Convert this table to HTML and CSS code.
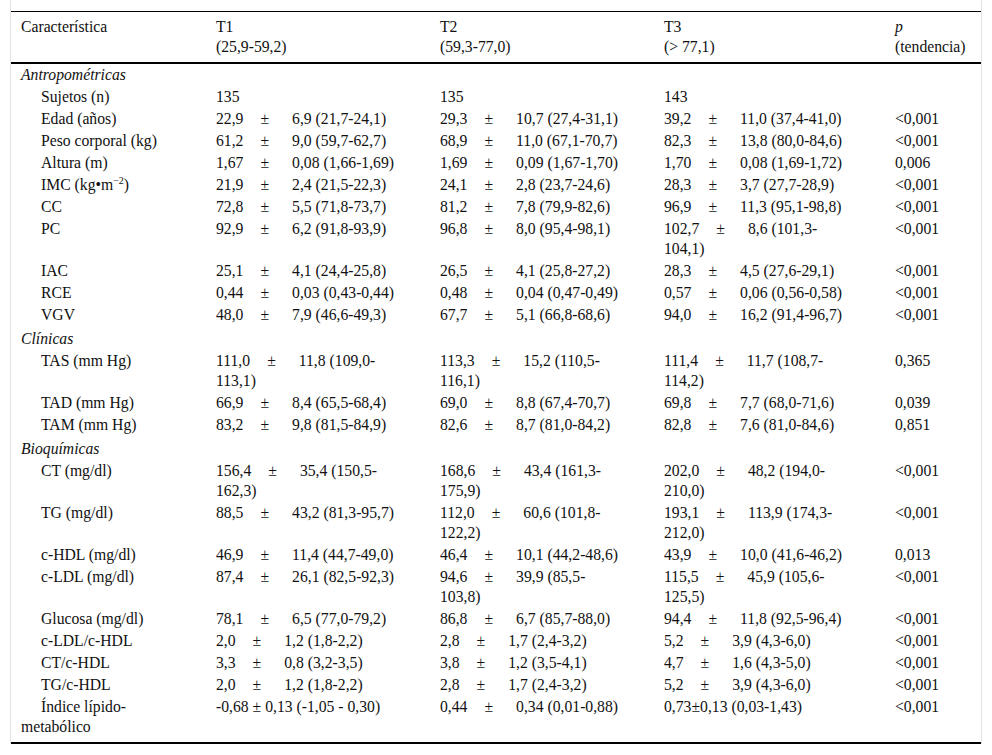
FILE: index.html
```html
<!DOCTYPE html>
<html lang="es">
<head>
<meta charset="utf-8">
<title>Tabla</title>
<link rel="stylesheet" href="styles.css">
</head>
<body>
<div class="frame">
<table class="tbl">
<colgroup>
<col class="c1"><col class="c2"><col class="c3"><col class="c4"><col class="c5">
</colgroup>
<thead>
<tr>
<th class="lab">Característica</th>
<th class="t">T1<br>(25,9-59,2)</th>
<th class="t">T2<br>(59,3-77,0)</th>
<th class="t t3">T3<br>(&gt; 77,1)</th>
<th class="p"><i>p</i><br>(tendencia)</th>
</tr>
</thead>
<tbody>
<tr><td class="sec" colspan="5">Antropométricas</td></tr>
<tr><td class="lab sub">Sujetos (n)</td><td class="t">135</td><td class="t">135</td><td class="t t3">143</td><td class="p"></td></tr>
<tr><td class="lab sub">Edad (años)</td><td class="t">22,9<span class="pm">±</span>6,9 (21,7-24,1)</td><td class="t">29,3<span class="pm">±</span>10,7 (27,4-31,1)</td><td class="t t3">39,2<span class="pm">±</span>11,0 (37,4-41,0)</td><td class="p">&lt;0,001</td></tr>
<tr><td class="lab sub">Peso corporal (kg)</td><td class="t">61,2<span class="pm">±</span>9,0 (59,7-62,7)</td><td class="t">68,9<span class="pm">±</span>11,0 (67,1-70,7)</td><td class="t t3">82,3<span class="pm">±</span>13,8 (80,0-84,6)</td><td class="p">&lt;0,001</td></tr>
<tr><td class="lab sub">Altura (m)</td><td class="t">1,67<span class="pm">±</span>0,08 (1,66-1,69)</td><td class="t">1,69<span class="pm">±</span>0,09 (1,67-1,70)</td><td class="t t3">1,70<span class="pm">±</span>0,08 (1,69-1,72)</td><td class="p">0,006</td></tr>
<tr><td class="lab sub">IMC (kg•m<sup>−2</sup>)</td><td class="t">21,9<span class="pm">±</span>2,4 (21,5-22,3)</td><td class="t">24,1<span class="pm">±</span>2,8 (23,7-24,6)</td><td class="t t3">28,3<span class="pm">±</span>3,7 (27,7-28,9)</td><td class="p">&lt;0,001</td></tr>
<tr><td class="lab sub">CC</td><td class="t">72,8<span class="pm">±</span>5,5 (71,8-73,7)</td><td class="t">81,2<span class="pm">±</span>7,8 (79,9-82,6)</td><td class="t t3">96,9<span class="pm">±</span>11,3 (95,1-98,8)</td><td class="p">&lt;0,001</td></tr>
<tr><td class="lab sub">PC</td><td class="t">92,9<span class="pm">±</span>6,2 (91,8-93,9)</td><td class="t">96,8<span class="pm">±</span>8,0 (95,4-98,1)</td><td class="t t3">102,7<span class="pm">±</span>8,6 (101,3-104,1)</td><td class="p">&lt;0,001</td></tr>
<tr><td class="lab sub">IAC</td><td class="t">25,1<span class="pm">±</span>4,1 (24,4-25,8)</td><td class="t">26,5<span class="pm">±</span>4,1 (25,8-27,2)</td><td class="t t3">28,3<span class="pm">±</span>4,5 (27,6-29,1)</td><td class="p">&lt;0,001</td></tr>
<tr><td class="lab sub">RCE</td><td class="t">0,44<span class="pm">±</span>0,03 (0,43-0,44)</td><td class="t">0,48<span class="pm">±</span>0,04 (0,47-0,49)</td><td class="t t3">0,57<span class="pm">±</span>0,06 (0,56-0,58)</td><td class="p">&lt;0,001</td></tr>
<tr><td class="lab sub">VGV</td><td class="t">48,0<span class="pm">±</span>7,9 (46,6-49,3)</td><td class="t">67,7<span class="pm">±</span>5,1 (66,8-68,6)</td><td class="t t3">94,0<span class="pm">±</span>16,2 (91,4-96,7)</td><td class="p">&lt;0,001</td></tr>
<tr><td class="sec sec-gap" colspan="5">Clínicas</td></tr>
<tr><td class="lab sub">TAS (mm Hg)</td><td class="t">111,0<span class="pm">±</span>11,8 (109,0-113,1)</td><td class="t">113,3<span class="pm">±</span>15,2 (110,5-116,1)</td><td class="t t3">111,4<span class="pm">±</span>11,7 (108,7-114,2)</td><td class="p">0,365</td></tr>
<tr><td class="lab sub">TAD (mm Hg)</td><td class="t">66,9<span class="pm">±</span>8,4 (65,5-68,4)</td><td class="t">69,0<span class="pm">±</span>8,8 (67,4-70,7)</td><td class="t t3">69,8<span class="pm">±</span>7,7 (68,0-71,6)</td><td class="p">0,039</td></tr>
<tr><td class="lab sub">TAM (mm Hg)</td><td class="t">83,2<span class="pm">±</span>9,8 (81,5-84,9)</td><td class="t">82,6<span class="pm">±</span>8,7 (81,0-84,2)</td><td class="t t3">82,8<span class="pm">±</span>7,6 (81,0-84,6)</td><td class="p">0,851</td></tr>
<tr><td class="sec sec-gap" colspan="5">Bioquímicas</td></tr>
<tr><td class="lab sub">CT (mg/dl)</td><td class="t">156,4<span class="pm">±</span>35,4 (150,5-162,3)</td><td class="t">168,6<span class="pm">±</span>43,4 (161,3-175,9)</td><td class="t t3">202,0<span class="pm">±</span>48,2 (194,0-210,0)</td><td class="p">&lt;0,001</td></tr>
<tr><td class="lab sub">TG (mg/dl)</td><td class="t">88,5<span class="pm">±</span>43,2 (81,3-95,7)</td><td class="t">112,0<span class="pm">±</span>60,6 (101,8-122,2)</td><td class="t t3">193,1<span class="pm">±</span>113,9 (174,3-212,0)</td><td class="p">&lt;0,001</td></tr>
<tr><td class="lab sub">c-HDL (mg/dl)</td><td class="t">46,9<span class="pm">±</span>11,4 (44,7-49,0)</td><td class="t">46,4<span class="pm">±</span>10,1 (44,2-48,6)</td><td class="t t3">43,9<span class="pm">±</span>10,0 (41,6-46,2)</td><td class="p">0,013</td></tr>
<tr><td class="lab sub">c-LDL (mg/dl)</td><td class="t">87,4<span class="pm">±</span>26,1 (82,5-92,3)</td><td class="t">94,6<span class="pm">±</span>39,9 (85,5-103,8)</td><td class="t t3">115,5<span class="pm">±</span>45,9 (105,6-125,5)</td><td class="p">&lt;0,001</td></tr>
<tr><td class="lab sub">Glucosa (mg/dl)</td><td class="t">78,1<span class="pm">±</span>6,5 (77,0-79,2)</td><td class="t">86,8<span class="pm">±</span>6,7 (85,7-88,0)</td><td class="t t3">94,4<span class="pm">±</span>11,8 (92,5-96,4)</td><td class="p">&lt;0,001</td></tr>
<tr><td class="lab sub">c-LDL/c-HDL</td><td class="t">2,0<span class="pm">±</span>1,2 (1,8-2,2)</td><td class="t">2,8<span class="pm">±</span>1,7 (2,4-3,2)</td><td class="t t3">5,2<span class="pm">±</span>3,9 (4,3-6,0)</td><td class="p">&lt;0,001</td></tr>
<tr><td class="lab sub">CT/c-HDL</td><td class="t">3,3<span class="pm">±</span>0,8 (3,2-3,5)</td><td class="t">3,8<span class="pm">±</span>1,2 (3,5-4,1)</td><td class="t t3">4,7<span class="pm">±</span>1,6 (4,3-5,0)</td><td class="p">&lt;0,001</td></tr>
<tr><td class="lab sub">TG/c-HDL</td><td class="t">2,0<span class="pm">±</span>1,2 (1,8-2,2)</td><td class="t">2,8<span class="pm">±</span>1,7 (2,4-3,2)</td><td class="t t3">5,2<span class="pm">±</span>3,9 (4,3-6,0)</td><td class="p">&lt;0,001</td></tr>
<tr class="last"><td class="lab sub">Índice lípido-metabólico</td><td class="t">-0,68 ± 0,13 (-1,05 - 0,30)</td><td class="t">0,44<span class="pm">±</span>0,34 (0,01-0,88)</td><td class="t t3">0,73±0,13 (0,03-1,43)</td><td class="p">&lt;0,001</td></tr>
</tbody>
</table>
</div>
</body>
</html>
```

FILE: styles.css
```css
html, body {
  margin: 0;
  padding: 0;
  background: #ffffff;
}

body {
  font-family: "Liberation Serif", "Times New Roman", serif;
  font-size: 15.7px;
  color: #111111;
}

.frame {
  width: 970px;
  margin-left: 11px;
  padding: 11px 0 0 0;
  box-shadow: -1px 0 0 #e2e2e2, 1px 0 0 #e2e2e2;
}

.tbl {
  width: 970px;
  table-layout: fixed;
  border-collapse: collapse;
  border-top: 1px solid #000;
  border-bottom: 2px solid #000;
}

.c1 { width: 195px; }
.c2 { width: 224px; }
.c3 { width: 224px; }
.c4 { width: 231px; }
.c5 { width: 96px; }

.tbl th {
  font-weight: normal;
  text-align: left;
  vertical-align: top;
  line-height: 20px;
  padding: 5px 0 5px 10px;
  border-bottom: 2px solid #000;
}

.tbl td {
  text-align: left;
  vertical-align: top;
  line-height: 20px;
  padding: 1px 0 1px 10px;
}

.tbl td.lab {
  padding-right: 30px;
}

.tbl td.sub {
  text-indent: 20px;
}

.tbl td.t {
  padding-right: 31px;
}

.tbl td.t3 {
  padding-right: 38px;
}

.tbl td.sec {
  font-style: italic;
}

.tbl td.sec-gap {
  padding-top: 3px;
}

.tbl tr.last td {
  padding-bottom: 5px;
}

.pm {
  margin: 0 23px 0 17px;
}

sup {
  font-size: 10px;
  line-height: 0;
  vertical-align: 6px;
}
```
